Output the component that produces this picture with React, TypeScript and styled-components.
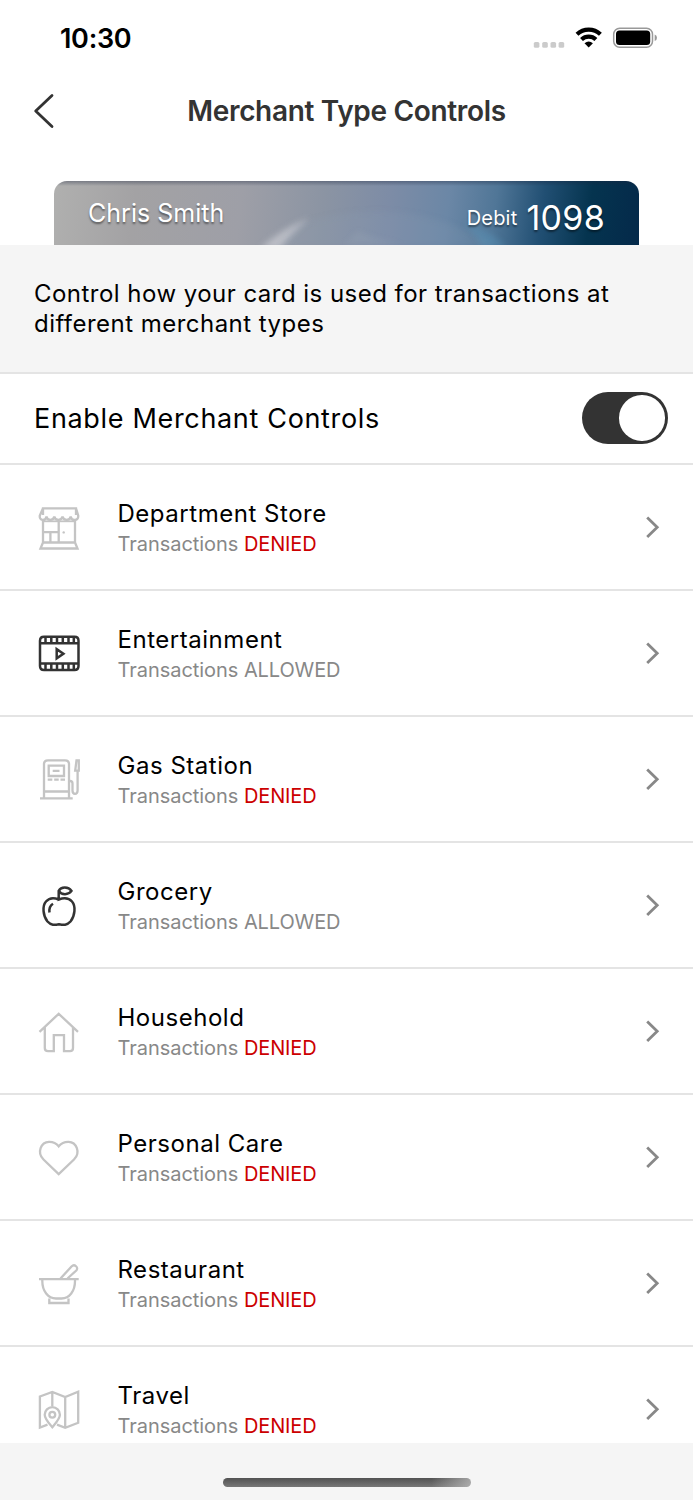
import React from 'react';
import styled, { createGlobalStyle } from 'styled-components';

const GlobalStyle = createGlobalStyle`
  * { box-sizing: border-box; }
  body { margin: 0; background: #fff; font-family: Inter, "Liberation Sans", sans-serif; }
`;

const Screen = styled.div`
  width: 693px;
  height: 1500px;
  display: flex;
  flex-direction: column;
  overflow: hidden;
  background: #fff;
  color: #000;
`;

const StatusBar = styled.div`
  height: 76px;
  flex: none;
  display: flex;
  align-items: center;
  justify-content: space-between;
  padding: 0 36px 0 60px;
`;

const Clock = styled.span`
  font-size: 27px;
  font-weight: 600;
  letter-spacing: -0.3px;
`;

const StatusIcons = styled.div`
  display: flex;
  align-items: center;
`;

const NavBar = styled.header`
  height: 105px;
  flex: none;
  display: grid;
  grid-template-columns: 100px 1fr 100px;
  padding-top: 13px;
`;

const BackButton = styled.button`
  height: 44px;
  border: 0;
  padding: 0 0 0 32px;
  background: none;
  display: flex;
  align-items: center;
`;

const Title = styled.h1`
  margin: 0;
  text-align: center;
  font-size: 28px;
  line-height: 44px;
  font-weight: 600;
  letter-spacing: -0.33px;
  color: #333;
  white-space: nowrap;
`;

const Card = styled.div`
  height: 64px;
  flex: none;
  margin: 0 54px;
  padding: 0 34px;
  border-radius: 13px 13px 0 0;
  overflow: hidden;
  display: flex;
  justify-content: space-between;
  color: #fff;
  text-shadow: 0 2px 2px rgba(0, 0, 0, 0.45);
  background:
    linear-gradient(180deg, rgba(25, 35, 60, 0.35) 0, rgba(25, 35, 60, 0) 5px),
    linear-gradient(97deg, #b0b0af 0%, #a3a2a4 14%, #9e9fa7 32%, #8b94a3 46%, #7d8ca6 57%, #6b87a6 67%, #507697 75%, #214f73 83%, #05344f 91%, #04294a 100%);
  position: relative;
`;

const Glow = styled.svg`
  position: absolute;
  inset: 0;
`;

const Holder = styled.span`
  position: relative;
  font-size: 25px;
  line-height: 64px;
  letter-spacing: 0.02px;
`;

const CardNumber = styled.span`
  position: relative;
  display: flex;
  align-items: center;
  gap: 9px;
  height: 72px;
`;

const CardKind = styled.span`
  padding-top: 2px;
  font-size: 20px;
  letter-spacing: 0.2px;
`;

const Digits = styled.span`
  font-size: 34px;
  letter-spacing: 0.3px;
`;

const Intro = styled.p`
  height: 127px;
  flex: none;
  margin: 0;
  padding: 34px 34px 0;
  background: #f5f5f5;
  font-size: 24px;
  line-height: 30px;
  letter-spacing: 0.47px;
`;

const EnableRow = styled.div`
  height: 91px;
  flex: none;
  display: flex;
  align-items: center;
  justify-content: space-between;
  padding: 0 25px 1px 34px;
  border-top: 2px solid #e4e4e4;
  font-size: 27px;
  letter-spacing: 0.67px;
`;

const Toggle = styled.button`
  width: 86px;
  height: 52px;
  border: 0;
  border-radius: 26px;
  padding: 0 3.5px;
  background: #333;
  display: flex;
  align-items: center;
  justify-content: flex-end;
`;

const Thumb = styled.span`
  width: 45.5px;
  height: 45.5px;
  border-radius: 50%;
  background: #fff;
`;

const List = styled.ul`
  flex: 1;
  min-height: 0;
  margin: 0;
  padding: 0;
  list-style: none;
  overflow: hidden;
`;

const Item = styled.li`
  height: 126px;
  display: flex;
  align-items: center;
  padding: 0 32px 0 35px;
  border-top: 2px solid #e4e4e4;
`;

const Icon = styled.svg<{ $active: boolean }>`
  width: 48px;
  height: 48px;
  flex: none;
  margin-right: 34.5px;
  fill: none;
  stroke: ${(p) => (p.$active ? '#333' : '#c4c4c4')};
  stroke-width: 2.3;
`;

const Label = styled.div`
  flex: 1;
  padding-top: 4px;
`;

const Name = styled.div`
  font-size: 24px;
  line-height: 30px;
  letter-spacing: 0.53px;
`;

const Status = styled.div`
  font-size: 20px;
  line-height: 30px;
  letter-spacing: -0.04px;
  color: #888;
`;

const State = styled.span<{ $denied: boolean }>`
  color: ${(p) => (p.$denied ? '#cc0000' : '#888')};
  letter-spacing: -0.12px;
`;

const Footer = styled.footer`
  height: 57px;
  flex: none;
  background: #f5f5f5;
  display: flex;
  justify-content: center;
  padding-top: 35px;
`;

const HomeIndicator = styled.div`
  width: 248px;
  height: 9px;
  border-radius: 5px;
  background:
    linear-gradient(90deg, rgba(190, 190, 190, 0) 84%, rgba(190, 190, 190, 0.75) 100%),
    linear-gradient(180deg, #525252, #777);
`;

const icons = {
  store: (
    <>
      <path d="M8 12V5.3H41V12M8 5.3 4.8 12.5C4 18 10.5 18.500 11.500 13.500 12 18 18.500 18 19.300 13.500 20 18 26.700 18 27.500 13.500 28.500 18 35 18 35.700 13.500 36.500 18.500 44 18 43.200 12.500L41 5.300" />
      <path d="M8 16V39.500M40 16V39.500M23.700 18V39.500M8 29.200H23.700M15.400 29.200V39.500M8 39.500H40L42.500 45.500H5.500Z" />
      <path d="M8 18.300H40" strokeWidth="1.800" />
      <circle cx="28.700" cy="29.400" r="1.200" fill="#c4c4c4" stroke="none" />
    </>
  ),
  film: (
    <path
      strokeWidth="2.500"
      d="M9 7.700H39.500Q43.500 7.700 43.500 11.700V37Q43.500 41 39.500 41H9Q5 41 5 37V11.700Q5 7.700 9 7.700ZM5 14.300H43.500M5 34.500H43.500M10.500 8V14M16.300 8V14M22 8V14M27.800 8V14M33.500 8V14M38.800 8V14M10.500 35V41M16.300 35V41M22 35V41M27.800 35V41M33.500 35V41M38.800 35V41M21.700 20.200V29.400L28.400 24.800Z"
    />
  ),
  gas: (
    <>
      <path d="M9 43V9Q9 5.300 13 5.300H30Q34 5.300 34 9V43M5 43.300H37.700M9 36.500H34M13.700 10.700H29V21H13.700ZM17.700 15.800H24.500M12.700 24.700H17.300M19.200 24.700H23.700M25.500 24.700H30" />
      <path d="M34 26H35Q37.500 26 37.500 28.500V35.500Q37.500 38.800 40 38.800T42.600 35.500V16M41.500 5.400H43.800V15.700H40.200Z" />
    </>
  ),
  apple: (
    <>
      <path strokeWidth="2.500" d="M23.700 18.500C19 16.500 14 17 11 20.500 7 25 8 35 12.500 40.500 16 44.500 19.500 44 24 43.200 28.500 44 32 44.500 35.500 40.500 40 35 41 25 37 20.500 34 17 29 16.500 23.700 18.500V9.800C26 5.500 33.500 5.500 36.500 9.900 33.500 14.200 26.500 14.200 23.700 10" />
      <path strokeWidth="2.500" d="M14.500 31.500Q13.700 25.500 18 22.800" />
    </>
  ),
  house: <path d="M4.500 24.800 23.700 6.800 43 24.800M9.800 20.500V41Q9.800 44.200 13 44.200H18.800V28.200H29V44.200H35Q38 44.200 38 41V20.500" />,
  heart: <path d="M23.700 41.200 8.500 26.500C1.500 19.500 6 9 14 8.800 18 8.700 21.500 10.500 23.700 13.300 26 10.500 29.500 8.700 33.500 8.800 41.500 9 46 19.500 39 26.500Z" />,
  bowl: <path d="M4 20.200H43.700M7.300 20.500V22C7.300 32 13 39.500 21 39.500H26.500C34.500 39.500 40 32 40 22V20.500M14.300 39.500V44H33.500V39.500M25.500 19.500 36.500 7.500C39.500 4.500 44 8.500 41.300 11.500L32.500 19.500" />,
  map: (
    <>
      <path d="M12.500 39.600 4.900 42.500V11.500L17.300 7 30.200 12 43.200 6.800V37.700L30.200 42.800 22 39.600M17.300 7V21M30.200 12V42.800" />
      <path d="M17.300 42.300C12.500 36.500 9.700 33.500 9.700 29.700A7.600 7.600 0 0 1 24.900 29.700C24.900 33.500 22 36.500 17.300 42.300Z" />
      <circle cx="17.300" cy="29.700" r="2.900" />
    </>
  ),
};

const merchants: { name: string; icon: keyof typeof icons; denied: boolean }[] = [
  { name: 'Department Store', icon: 'store', denied: true },
  { name: 'Entertainment', icon: 'film', denied: false },
  { name: 'Gas Station', icon: 'gas', denied: true },
  { name: 'Grocery', icon: 'apple', denied: false },
  { name: 'Household', icon: 'house', denied: true },
  { name: 'Personal Care', icon: 'heart', denied: true },
  { name: 'Restaurant', icon: 'bowl', denied: true },
  { name: 'Travel', icon: 'map', denied: true },
];

export default function App() {
  return (
    <>
      <GlobalStyle />
      <Screen>
        <StatusBar>
          <Clock>10:30</Clock>
          <StatusIcons>
            <svg width="124" height="24" viewBox="0 0 124 24">
              {[0.8, 9.2, 17.5, 25.6].map((x) => (
                <rect key={x} x={x} y="16" width="5.600" height="5.800" rx="1.600" fill="#cbcbcb" />
              ))}
              <g transform="translate(55.700 0)" fill="none" stroke="#000" strokeWidth="4.200">
                <path d="M-11.700 8.300A17 17 0 0 1 11.700 8.300" />
                <path d="M-7.200 13.500A10.500 10.500 0 0 1 7.200 13.500" />
                <path d="M0 21.400-4.200 17.200Q0 13.700 4.200 17.200Z" fill="#000" stroke="none" />
              </g>
              <rect x="80.700" y="2.200" width="38.800" height="19" rx="6" fill="none" stroke="#999" strokeWidth="1.500" />
              <rect x="83" y="4.600" width="34.200" height="14.300" rx="3.500" fill="#000" />
              <path d="M121.700 8.500Q124 9.300 124 11.800T121.700 15Z" fill="#999" />
            </svg>
          </StatusIcons>
        </StatusBar>
        <NavBar>
          <BackButton aria-label="Back">
            <svg width="24" height="36" viewBox="0 0 24 36" fill="none" stroke="#333" strokeWidth="2.800" strokeLinecap="round" strokeLinejoin="round">
              <path d="M20 2.500 3.700 18 20 33.500" />
            </svg>
          </BackButton>
          <Title>Merchant Type Controls</Title>
        </NavBar>
        <Card>
          <Glow width="585" height="64" viewBox="0 0 585 64">
            <defs>
              <filter id="soft" x="-50%" y="-50%" width="200%" height="200%">
                <feGaussianBlur stdDeviation="3" />
              </filter>
            </defs>
            <path d="M206 68Q226 48 256 37 240 50 226 68Z" fill="#d5d6dc" opacity="0.6" filter="url(#soft)" />
            <path d="M250 42Q300 26 350 32T440 66H225Z" fill="#8fa3b8" opacity="0.16" filter="url(#soft)" />
            <path d="M410 42Q435 48 452 66H428Q422 52 410 42Z" fill="#5f9fc4" opacity="0.35" filter="url(#soft)" />
            <path d="M290 64 303 50 325 58 350 64Z" fill="#b6c2cc" opacity="0.12" filter="url(#soft)" />
          </Glow>
          <Holder>Chris Smith</Holder>
          <CardNumber>
            <CardKind>Debit</CardKind>
            <Digits>1098</Digits>
          </CardNumber>
        </Card>
        <Intro>
          Control how your card is used for transactions at
          <br />
          different merchant types
        </Intro>
        <EnableRow>
          Enable Merchant Controls
          <Toggle role="switch" aria-checked="true" aria-label="Enable Merchant Controls">
            <Thumb />
          </Toggle>
        </EnableRow>
        <List>
          {merchants.map((m) => (
            <Item key={m.name}>
              <Icon $active={!m.denied} viewBox="0 0 48 48">
                {icons[m.icon]}
              </Icon>
              <Label>
                <Name>{m.name}</Name>
                <Status>
                  Transactions <State $denied={m.denied}>{m.denied ? 'DENIED' : 'ALLOWED'}</State>
                </Status>
              </Label>
              <svg width="16" height="24" viewBox="0 0 16 24" fill="none" stroke="#888" strokeWidth="2.800">
                <path d="M2.200 2.500 12.200 12.200 2.200 21.900" />
              </svg>
            </Item>
          ))}
        </List>
        <Footer>
          <HomeIndicator />
        </Footer>
      </Screen>
    </>
  );
}
